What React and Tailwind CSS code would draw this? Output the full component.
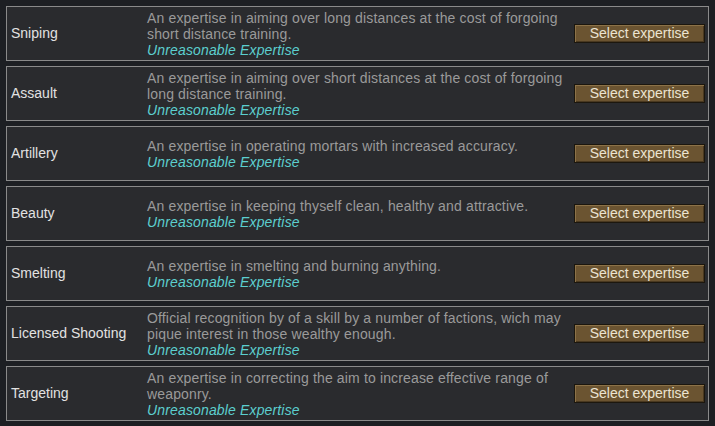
const expertises = [
  {
    name: "Sniping",
    desc: "An expertise in aiming over long distances at the cost of forgoing short distance training.",
  },
  {
    name: "Assault",
    desc: "An expertise in aiming over short distances at the cost of forgoing long distance training.",
  },
  {
    name: "Artillery",
    desc: "An expertise in operating mortars with increased accuracy.",
  },
  {
    name: "Beauty",
    desc: "An expertise in keeping thyself clean, healthy and attractive.",
  },
  {
    name: "Smelting",
    desc: "An expertise in smelting and burning anything.",
  },
  {
    name: "Licensed Shooting",
    desc: "Official recognition by of a skill by a number of factions, wich may pique interest in those wealthy enough.",
  },
  {
    name: "Targeting",
    desc: "An expertise in correcting the aim to increase effective range of weaponry.",
  },
];

const ExpertiseRow = ({ name, desc }) => {
  return (
    <div className="h-[55px] flex items-center border border-[#8a8a8a] bg-[#2a2b2e]">
      <div className="w-[140px] pl-[4px] text-[14px] text-[#e2e2e2]">{name}</div>
      <div className="flex-1 pr-[4px] text-[14px] leading-[16px] tracking-[0.15px] text-[#9a9a9a]">
        <div>{desc}</div>
        <div className="italic text-[#5ccfcf]">Unreasonable Expertise</div>
      </div>
      <button
        type="button"
        className="mr-[3px] w-[131px] h-[19px] flex items-center justify-center border border-[#1c170e] bg-[#6b5431] text-[14px] text-[#ece4d2] shadow-[inset_1px_1px_0_#8c7248,inset_-1px_-1px_0_#4a3920]"
      >
        Select expertise
      </button>
    </div>
  );
};

export default function App() {
  return (
    <div
      className="w-[715px] h-[426px] overflow-hidden bg-[#1d1f23] px-[6px] pt-[6px] flex flex-col gap-[5px]"
      style={{ fontFamily: '"Liberation Sans", Arial, sans-serif' }}
    >
      {expertises.map((item) => (
        <ExpertiseRow key={item.name} name={item.name} desc={item.desc} />
      ))}
    </div>
  );
}
